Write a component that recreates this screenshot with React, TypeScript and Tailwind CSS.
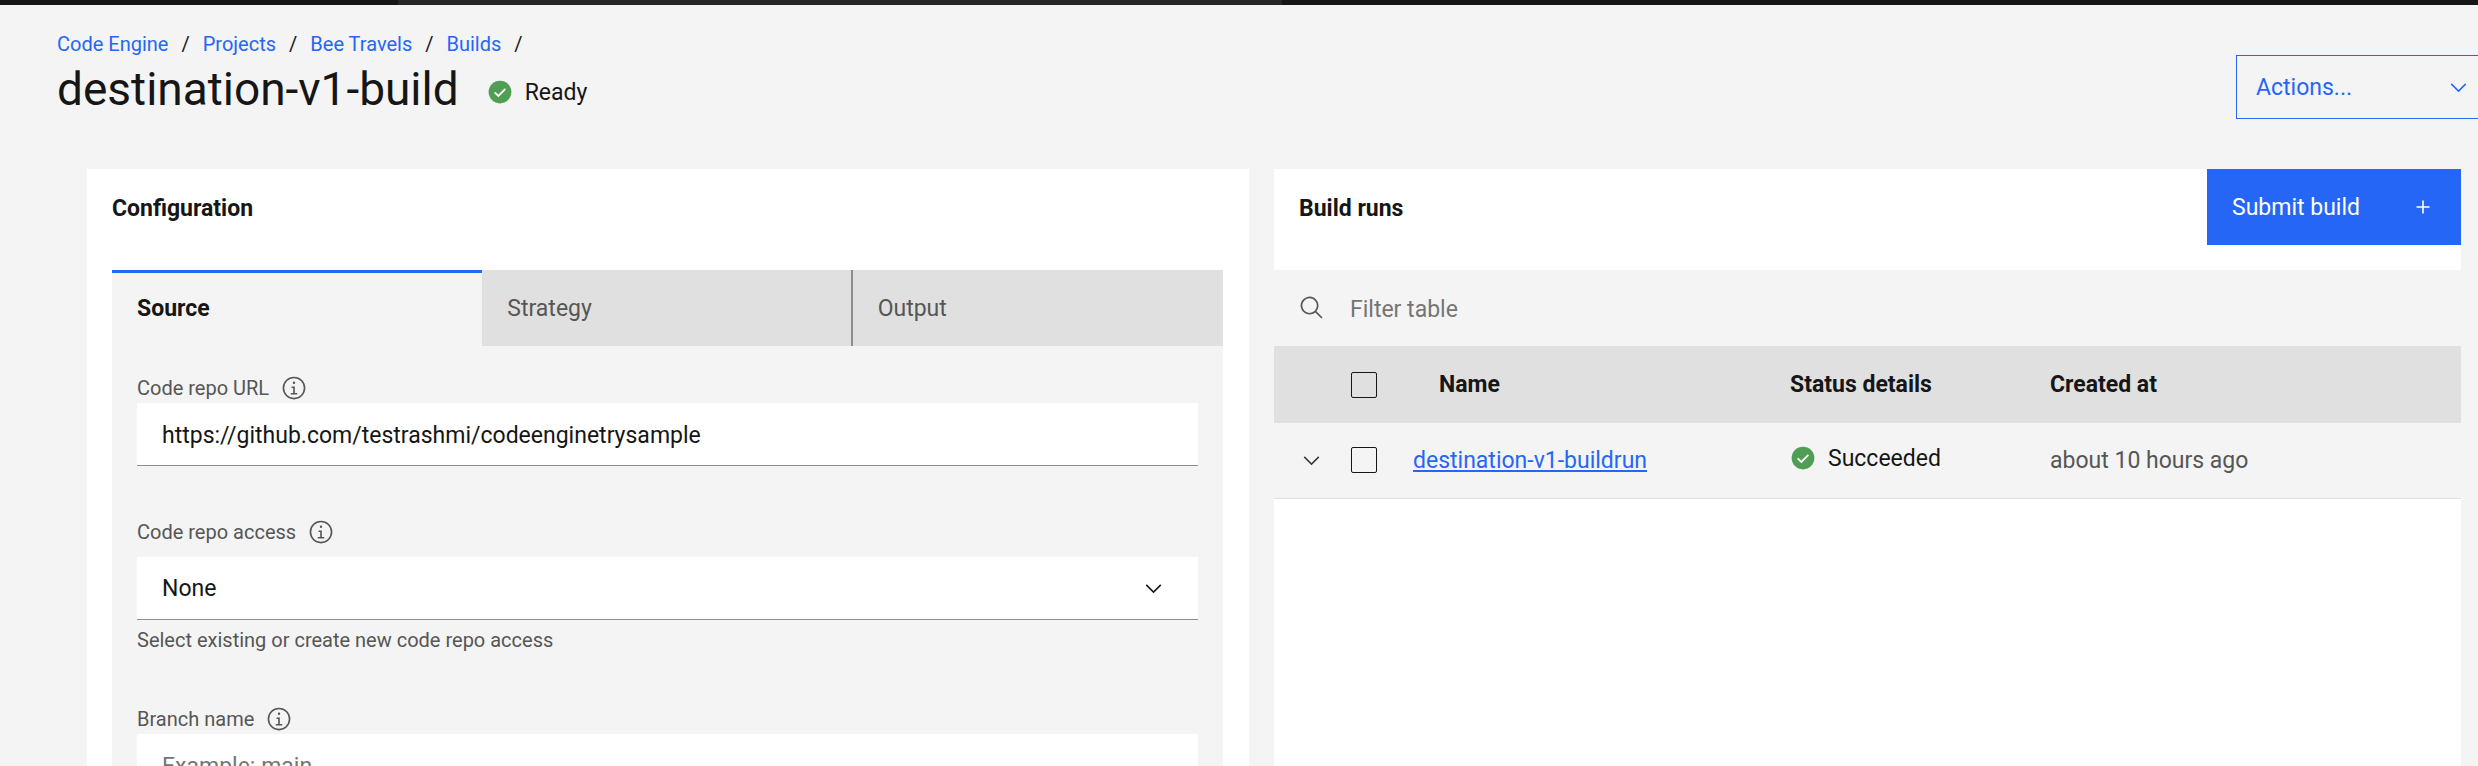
import React, { useState } from "react";

type IconProps = { className?: string };

function CheckmarkFilled({ className = "" }: IconProps) {
  return (
    <svg viewBox="0 0 16 16" className={"shrink-0 " + className} aria-hidden="true">
      <circle cx="8" cy="8" r="7" fill="#4f9e53" />
      <path d="M4.7 8.2 7 10.4l4.3-4.3" fill="none" stroke="#fff" strokeWidth="1.1" />
    </svg>
  );
}

function Information({ className = "" }: IconProps) {
  return (
    <svg viewBox="0 0 32 32" fill="currentColor" className={"shrink-0 " + className} aria-hidden="true">
      <path d="M17 22v-8h-4v2h2v6h-3v2h8v-2zM16 8a1.5 1.5 0 1 0 1.5 1.5A1.5 1.5 0 0 0 16 8z" />
      <path d="M16 30a14 14 0 1 1 14-14 14 14 0 0 1-14 14zm0-26a12 12 0 1 0 12 12A12 12 0 0 0 16 4z" />
    </svg>
  );
}

function ChevronDown({ className = "" }: IconProps) {
  return (
    <svg viewBox="0 0 16 16" fill="currentColor" className={"shrink-0 " + className} aria-hidden="true">
      <path d="M8 11 3 6l.7-.7L8 9.6l4.3-4.3.7.7z" />
    </svg>
  );
}

function Search({ className = "" }: IconProps) {
  return (
    <svg viewBox="0 0 32 32" fill="currentColor" className={"shrink-0 " + className} aria-hidden="true">
      <path d="m29 27.586-7.552-7.552a11.018 11.018 0 1 0-1.414 1.414L27.586 29ZM4 13a9 9 0 1 1 9 9 9.01 9.01 0 0 1-9-9Z" />
    </svg>
  );
}

function Add({ className = "" }: IconProps) {
  return (
    <svg viewBox="0 0 32 32" fill="currentColor" className={"shrink-0 " + className} aria-hidden="true">
      <path d="M17 15V8h-2v7H8v2h7v7h2v-7h7v-2z" />
    </svg>
  );
}

function FieldLabel({ htmlFor, children }: { htmlFor: string; children: string }) {
  return (
    <div className="flex h-6 items-center gap-3 text-[#565656]">
      <label htmlFor={htmlFor} className="text-xl leading-6">
        {children}
      </label>
      <button type="button" aria-label={"About " + children}>
        <Information className="size-[26px]" />
      </button>
    </div>
  );
}

const crumbs = ["Code Engine", "Projects", "Bee Travels", "Builds"];
const tabs = ["Source", "Strategy", "Output"];
const checkbox =
  "block size-[26px] appearance-none rounded-[2px] border border-[#161616] checked:bg-[#161616]";
const field =
  "block h-[63px] w-full appearance-none border-b border-[#8d8d8d] bg-white px-[25px] pt-0.5 text-[23px] outline-none placeholder:text-[#757575]";

function Configuration() {
  const [active, setActive] = useState("Source");
  return (
    <section className="min-w-0 bg-white pr-[26px] pl-[25px]">
      <h2 className="h-[101px] pt-6 text-[23px] leading-8 font-bold">Configuration</h2>
      <div role="tablist" className="grid grid-cols-3">
        {tabs.map((tab, i) => (
          <button
            key={tab}
            type="button"
            role="tab"
            aria-selected={tab === active}
            onClick={() => setActive(tab)}
            className={
              "h-[76px] px-[25px] text-left text-[23px] " +
              (tab === active
                ? "border-t-[3px] border-[#2666f6] bg-[#f4f4f4] pb-px font-bold"
                : "bg-[#e0e0e0] pt-0.5 text-[#565656] " + (i === 1 ? "border-r-2 border-[#8d8d8d]" : ""))
            }
          >
            {tab}
          </button>
        ))}
      </div>
      <form className="bg-[#f4f4f4] px-[25px] pt-[30px]">
        <FieldLabel htmlFor="repo-url">Code repo URL</FieldLabel>
        <input
          id="repo-url"
          defaultValue="https://github.com/testrashmi/codeenginetrysample"
          className={"mt-[3px] " + field}
        />
        <div className="mt-[54px]">
          <FieldLabel htmlFor="repo-access">Code repo access</FieldLabel>
        </div>
        <div className="relative mt-[13px]">
          <select id="repo-access" className={field}>
            <option>None</option>
          </select>
          <ChevronDown className="pointer-events-none absolute top-[19px] right-8 size-[25px]" />
        </div>
        <p className="mt-2 text-xl leading-6 text-[#565656]">Select existing or create new code repo access</p>
        <div className="mt-[55px]">
          <FieldLabel htmlFor="branch">Branch name</FieldLabel>
        </div>
        <input id="branch" placeholder="Example: main" className={"mt-[3px] " + field} />
      </form>
    </section>
  );
}

function BuildRuns() {
  return (
    <section className="min-w-0 bg-white">
      <div className="flex h-[101px] items-start justify-between">
        <h2 className="pt-6 pl-[25px] text-[23px] leading-8 font-bold">Build runs</h2>
        <button
          type="button"
          className="flex h-[76px] w-[254px] items-center justify-between bg-[#2666f6] px-[25px] text-[23px] text-white"
        >
          <span className="pt-0.5">Submit build</span>
          <Add className="size-[26px]" />
        </button>
      </div>
      <label className="flex h-[76px] items-center gap-[25px] bg-[#f4f4f4] pl-[25px] text-[#565656]">
        <Search className="size-[26px]" />
        <input
          type="text"
          aria-label="Filter table"
          placeholder="Filter table"
          className="h-full min-w-0 flex-1 bg-transparent pt-0.5 text-[23px] outline-none placeholder:text-[#757575]"
        />
      </label>
      <table className="w-full table-fixed text-left text-[23px]">
        <colgroup>
          <col className="w-[77px]" />
          <col className="w-[62px]" />
          <col className="w-[377px]" />
          <col className="w-[260px]" />
          <col />
        </colgroup>
        <thead className="bg-[#e0e0e0]">
          <tr className="h-[77px]">
            <th aria-label="Expand" />
            <th>
              <input type="checkbox" aria-label="Select all rows" className={checkbox} />
            </th>
            <th className="pt-0.5 pl-[26px] font-bold">Name</th>
            <th className="pt-0.5 font-bold">Status details</th>
            <th className="pt-0.5 font-bold">Created at</th>
          </tr>
        </thead>
        <tbody>
          <tr className="h-[75px] border-b border-[#e0e0e0] bg-[#f4f4f4]">
            <td className="pl-[25px]">
              <button type="button" aria-label="Expand row" className="block text-[#393939]">
                <ChevronDown className="size-[25px]" />
              </button>
            </td>
            <td>
              <input type="checkbox" aria-label="Select destination-v1-buildrun" className={checkbox} />
            </td>
            <td className="pt-0.5">
              <a href="#buildrun" className="text-[#2666f6] underline underline-offset-2">
                destination-v1-buildrun
              </a>
            </td>
            <td className="pb-1">
              <span className="flex items-center gap-3">
                <CheckmarkFilled className="size-[26px]" />
                <span className="pt-0.5">Succeeded</span>
              </span>
            </td>
            <td className="pt-0.5 text-[#565656]">about 10 hours ago</td>
          </tr>
        </tbody>
      </table>
    </section>
  );
}

export default function App() {
  return (
    <div className="flex h-screen flex-col overflow-hidden bg-[#f4f4f4] font-['Roboto',sans-serif] text-[#161616]">
      <div className="flex h-[5px] shrink-0 bg-[#161616]">
        <div className="ml-[398px] w-[884px] bg-[#262626]" />
      </div>
      <header className="flex h-[164px] shrink-0 items-start justify-between pl-[57px]">
        <div className="pt-[27px]">
          <nav aria-label="Breadcrumb">
            <ol className="flex text-xl leading-6">
              {crumbs.map((crumb) => (
                <li key={crumb} className="flex">
                  <a href="#crumb" className="text-[#2666f6]">
                    {crumb}
                  </a>
                  <span className="px-[13px]">/</span>
                </li>
              ))}
            </ol>
          </nav>
          <div className="mt-[5px] flex items-center gap-7">
            <h1 className="text-[46px] leading-[56px]">destination-v1-build</h1>
            <span className="flex items-center gap-3 pt-1.5 text-[23px]">
              <CheckmarkFilled className="size-[26px]" />
              <span className="pt-0.5">Ready</span>
            </span>
          </div>
        </div>
        <button
          type="button"
          className="mt-[50px] -mr-3 flex h-16 w-[254px] items-center justify-between border border-[#2666f6] pr-[18px] pl-[19px] text-[23px] text-[#2666f6]"
        >
          <span className="pt-0.5">Actions...</span>
          <ChevronDown className="size-[25px]" />
        </button>
      </header>
      <main className="grid flex-1 grid-cols-[1162fr_1187fr] gap-[25px] pr-[17px] pl-[87px]">
        <Configuration />
        <BuildRuns />
      </main>
    </div>
  );
}
